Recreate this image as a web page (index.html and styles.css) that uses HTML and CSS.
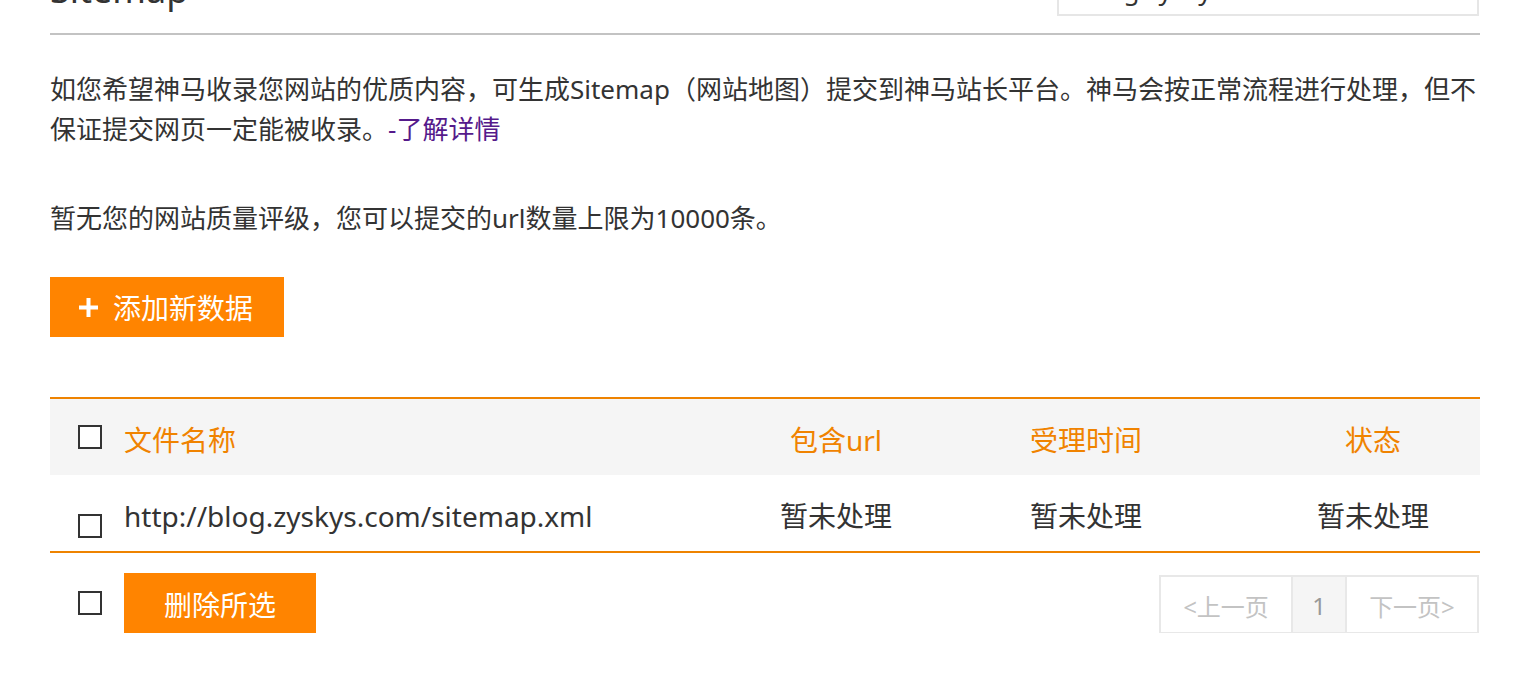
FILE: index.html
```html
<!DOCTYPE html>
<html lang="zh-CN">
<head>
<meta charset="utf-8">
<title>Sitemap</title>
<link rel="stylesheet" href="styles.css">
</head>
<body>
<div class="page">
  <div class="head">
    <h1 class="title">Sitemap</h1>
    <div class="site-select">blog.zyskys.com</div>
  </div>

  <p class="desc">如您希望神马收录您网站的优质内容，可生成Sitemap（网站地图）提交到神马站长平台。神马会按正常流程进行处理，但不保证提交网页一定能被收录。<a class="more" href="#">-了解详情</a></p>

  <p class="quota">暂无您的网站质量评级，您可以提交的url数量上限为10000条。</p>

  <button class="btn btn-add" type="button">
    <svg class="plus" width="19" height="19" viewBox="0 0 19 19" aria-hidden="true"><rect x="7.5" y="0" width="4" height="19" fill="#fff"/><rect x="0" y="7.5" width="19" height="4" fill="#fff"/></svg>
    <span>添加新数据</span>
  </button>

  <div class="table">
    <div class="tr thead">
      <span class="cell cell-cb"><span class="cb"></span></span>
      <span class="cell cell-name">文件名称</span>
      <span class="cell cell-url">包含url</span>
      <span class="cell cell-time">受理时间</span>
      <span class="cell cell-status">状态</span>
    </div>
    <div class="tr tbody">
      <span class="cell cell-cb"><span class="cb cb-low"></span></span>
      <span class="cell cell-name">http://blog.zyskys.com/sitemap.xml</span>
      <span class="cell cell-url">暂未处理</span>
      <span class="cell cell-time">暂未处理</span>
      <span class="cell cell-status">暂未处理</span>
    </div>
  </div>

  <div class="foot">
    <span class="cb foot-cb"></span>
    <button class="btn btn-del" type="button">删除所选</button>
    <div class="pager">
      <span class="pg pg-prev">&lt;上一页</span>
      <span class="pg pg-cur">1</span>
      <span class="pg pg-next">下一页&gt;</span>
    </div>
  </div>
</div>
</body>
</html>
```

FILE: styles.css
```css
* { box-sizing: border-box; }

html, body {
  margin: 0;
  padding: 0;
  background: #fff;
}

body {
  font-family: "Noto Sans", "Noto Sans CJK SC", sans-serif;
  color: #333;
  overflow: hidden;
}

.page {
  width: 1526px;
  padding: 0 46px 0 50px;
  margin-top: -40px;
}

/* header (scrolled partly out of view) */
.head {
  display: flex;
  justify-content: space-between;
  align-items: flex-start;
  height: 75px;
  border-bottom: 2px solid #c3c3c3;
}

.title {
  margin: 12px 0 0;
  font-size: 36px;
  line-height: 36px;
  font-weight: normal;
  color: #333;
}

.site-select {
  width: 422px;
  height: 48px;
  margin: 8px 1px 0 0;
  border: 2px solid #e6e6e6;
  padding: 0 26px;
  font-size: 26px;
  line-height: 40px;
  color: #333;
}

/* text */
.desc {
  margin: 34px 0 0;
  font-size: 26px;
  line-height: 40px;
}

.more {
  color: #551a8b;
  text-decoration: none;
}

.quota {
  margin: 49px 0 0;
  font-size: 26px;
  line-height: 40px;
}

/* buttons */
.btn {
  display: flex;
  align-items: center;
  border: 0;
  background: #ff8400;
  color: #fff;
  font-family: inherit;
  font-size: 28px;
  line-height: 40px;
  cursor: pointer;
}

.btn-add {
  margin-top: 39px;
  width: 234px;
  height: 60px;
  padding: 2px 0 0 29px;
  gap: 15px;
}

.plus { display: block; flex: none; margin-top: -2px; }

/* table */
.table {
  margin-top: 60px;
  border-top: 2px solid #ee8300;
  border-bottom: 2px solid #ee8300;
}

.tr {
  display: grid;
  grid-template-columns: 74px 587px 250px 250px 269px;
  align-items: center;
  height: 76px;
  font-size: 28px;
  line-height: 40px;
}

.thead {
  background: #f5f5f5;
  color: #f08300;
}

.tbody {
  color: #333;
}

.cell {
  padding-top: 5px;
}

.cell-cb {
  padding-top: 0;
  padding-left: 28px;
  display: flex;
}

.cell-url,
.cell-time {
  text-align: center;
}

.cell-status {
  text-align: center;
  padding-left: 55px;
}

.cb {
  display: block;
  width: 24px;
  height: 24px;
  border: 2px solid #333;
  background: #fff;
}

.cb-low {
  margin-top: 25px;
}

/* footer */
.foot {
  display: flex;
  align-items: center;
  margin-top: 20px;
  height: 60px;
}

.foot-cb {
  margin-left: 28px;
}

.btn-del {
  margin-left: 22px;
  width: 192px;
  height: 60px;
  justify-content: center;
  padding: 3px 0 0;
}

.pager {
  display: flex;
  margin-left: auto;
  margin-right: 1px;
  margin-top: 3px;
  height: 59px;
  border: 2px solid #e8e8e8;
  font-size: 24px;
  color: #c3c3c3;
}

.pg {
  display: flex;
  align-items: center;
  justify-content: center;
  height: 100%;
  padding-top: 2px;
}

.pg-prev { width: 130px; }

.pg-cur {
  width: 56px;
  border-left: 2px solid #e8e8e8;
  border-right: 2px solid #e8e8e8;
  background: #f5f5f5;
  color: #999;
}

.pg-next { width: 130px; }
```
